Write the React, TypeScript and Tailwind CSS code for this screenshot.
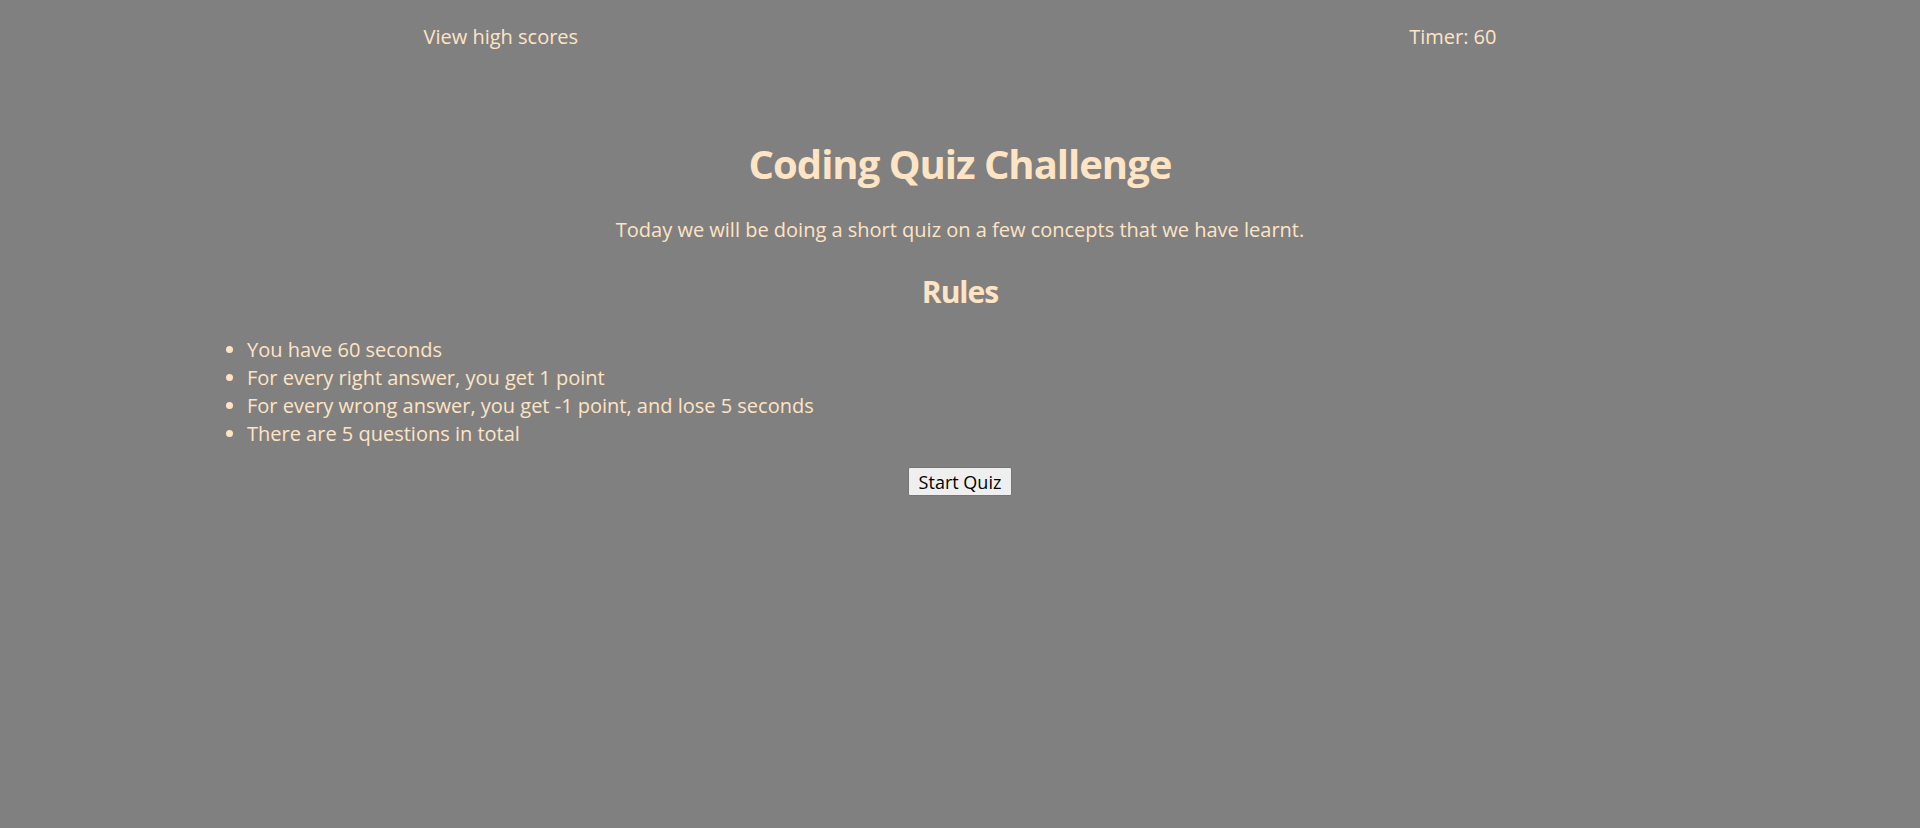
const rules = [
  "You have 60 seconds",
  "For every right answer, you get 1 point",
  "For every wrong answer, you get -1 point, and lose 5 seconds",
  "There are 5 questions in total",
];

export default function App() {
  return (
    <div className="min-h-screen bg-[#808080] text-[#ffe4c4] font-['Comic_Sans_MS','Open_Sans',sans-serif] text-[20px]">
      <div className="px-2 pt-[9px] pb-2">
        <header className="flex h-[56px] items-center justify-around leading-[28px]">
          <a className="cursor-pointer">View high scores</a>
          <span>Timer: 60</span>
        </header>

        <main>
          <h1 className="mt-[75px] text-center text-[40px] font-bold leading-[48px] tracking-[-1px]">
            Coding Quiz Challenge
          </h1>
          <p className="mt-[28px] text-center leading-[28px]">
            Today we will be doing a short quiz on a few concepts that we have learnt.
          </p>
          <h2 className="mt-[30px] text-center text-[30px] font-bold leading-[36px] tracking-[-1px]">
            Rules
          </h2>
          <ul className="mt-[26px] list-disc pl-[239px] leading-[28px]">
            {rules.map((rule) => (
              <li key={rule}>{rule}</li>
            ))}
          </ul>
          <div className="mt-[19px] flex justify-center">
            <button className="h-[29px] w-[104px] rounded-[2px] border border-[#767676] bg-[#efefef] text-[18px] leading-[22px] text-black">
              Start Quiz
            </button>
          </div>
        </main>
      </div>
    </div>
  );
}
